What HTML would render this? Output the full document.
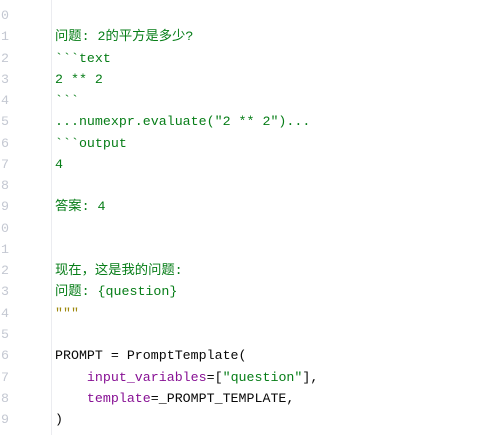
<!DOCTYPE html>
<html><head><meta charset="utf-8"><style>
html,body{margin:0;padding:0;background:#fff;width:480px;height:435px;overflow:hidden}
.g{position:absolute;left:0;top:0;width:51px;height:435px;background:#fff;border-right:1px solid #ebecf0}
.wrap{position:absolute;left:0;top:5px;width:480px}
.l{height:21.27px;line-height:21.27px;font-family:"Liberation Mono","Noto Sans CJK SC",monospace;font-size:13.3px;white-space:pre;position:relative}
.n{position:absolute;left:-3px;width:12px;color:#c4c8d2;text-align:right}
.c{position:absolute;left:55px;color:#080808}
.s{color:#067d17}.p{color:#871094}.o{color:#9e880d}
</style></head><body>
<div class="g"></div>
<div class="wrap">
<div class="l"><span class="n">0</span><span class="c"></span></div>
<div class="l"><span class="n">1</span><span class="c s">问题: 2的平方是多少?</span></div>
<div class="l"><span class="n">2</span><span class="c s">&#96;&#96;&#96;text</span></div>
<div class="l"><span class="n">3</span><span class="c s">2 ** 2</span></div>
<div class="l"><span class="n">4</span><span class="c s">&#96;&#96;&#96;</span></div>
<div class="l"><span class="n">5</span><span class="c s">...numexpr.evaluate("2 ** 2")...</span></div>
<div class="l"><span class="n">6</span><span class="c s">&#96;&#96;&#96;output</span></div>
<div class="l"><span class="n">7</span><span class="c s">4</span></div>
<div class="l"><span class="n">8</span><span class="c"></span></div>
<div class="l"><span class="n">9</span><span class="c s">答案: 4</span></div>
<div class="l"><span class="n">0</span><span class="c"></span></div>
<div class="l"><span class="n">1</span><span class="c"></span></div>
<div class="l"><span class="n">2</span><span class="c s">现在，这是我的问题:</span></div>
<div class="l"><span class="n">3</span><span class="c s">问题: {question}</span></div>
<div class="l"><span class="n">4</span><span class="c o">"""</span></div>
<div class="l"><span class="n">5</span><span class="c"></span></div>
<div class="l"><span class="n">6</span><span class="c">PROMPT = PromptTemplate(</span></div>
<div class="l"><span class="n">7</span><span class="c">    <span class="p">input_variables</span>=[<span class="s">"question"</span>],</span></div>
<div class="l"><span class="n">8</span><span class="c">    <span class="p">template</span>=_PROMPT_TEMPLATE,</span></div>
<div class="l"><span class="n">9</span><span class="c">)</span></div>
</div>
</body></html>
